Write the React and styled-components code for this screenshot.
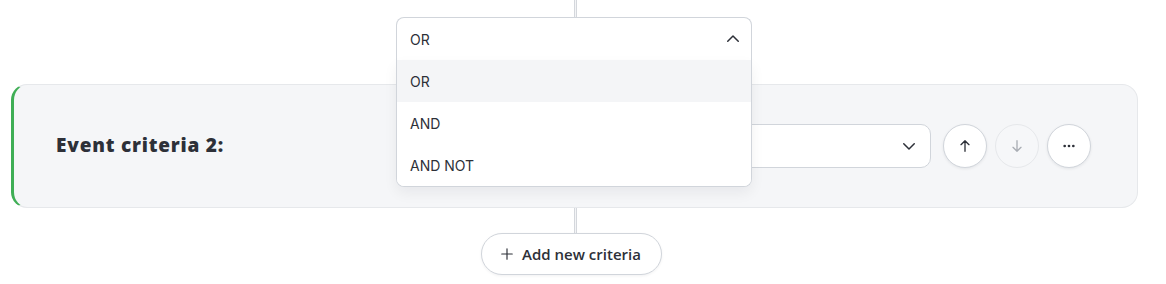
import React, { useState } from "react";
import styled, { createGlobalStyle } from "styled-components";

const GlobalStyle = createGlobalStyle`
  body {
    margin: 0;
    background: #ffffff;
    font-family: Inter, "Noto Sans", sans-serif;
    color: #2d3038;
  }
`;

const Page = styled.div`
  width: 1166px;
  height: 284px;
  display: flex;
  flex-direction: column;
  align-items: stretch;
  padding: 0 28px 0 11px;
  box-sizing: border-box;
`;

const Connector = styled.div`
  display: flex;
  flex-direction: column;
  align-items: center;
  padding-left: 2px;
`;

const Line = styled.div`
  width: 3px;
  height: ${(p) => p.h}px;
  box-sizing: border-box;
  border-left: 1px solid #d4d7dc;
  border-right: 1px solid #d4d7dc;
  background: #f3f4f6;
`;

const OperatorSelect = styled.div`
  position: relative;
  width: 356px;
  flex-shrink: 0;
  box-sizing: border-box;
  z-index: 2;
  margin-left: -3px;
`;

const Trigger = styled.div`
  height: 43px;
  box-sizing: border-box;
  display: flex;
  align-items: center;
  justify-content: space-between;
  padding: 0 9px 0 13px;
  font-size: 14px;
  color: #2d3038;
  background: #fff;
  border: 1px solid #d1d5db;
  border-bottom: none;
  border-radius: 8px 8px 0 0;
`;

const Menu = styled.div`
  position: absolute;
  left: 0;
  right: 0;
  top: 43px;
  background: #fff;
  border: 1px solid #d1d5db;
  border-top: none;
  border-radius: 0 0 8px 8px;
  box-shadow: 0 6px 14px rgba(17, 24, 39, 0.06);
  overflow: hidden;
`;

const Option = styled.div`
  height: 42px;
  display: flex;
  align-items: center;
  padding: 0 13px;
  font-size: 14px;
  color: #2d3038;
  background: ${(p) => (p.active ? "#f4f5f7" : "#fff")};
`;

const Card = styled.div`
  height: 124px;
  box-sizing: border-box;
  display: flex;
  align-items: center;
  padding: 0 46px 0 42px;
  background: #f5f6f8;
  border: 1px solid #e6e8eb;
  border-left: 3px solid #3fae55;
  border-radius: 16px;
`;

const Label = styled.div`
  font-family: "Open Sans", Inter, sans-serif;
  font-size: 19px;
  font-weight: 800;
  letter-spacing: 0.8px;
  color: #2d3038;
  flex: 1;
  padding-bottom: 2px;
`;

const FieldSelect = styled.div`
  width: 380px;
  height: 44px;
  box-sizing: border-box;
  display: flex;
  align-items: center;
  justify-content: flex-end;
  padding-right: 12px;
  background: #fff;
  border: 1px solid #d1d5db;
  border-radius: 10px;
  margin-right: 12px;
`;

const Actions = styled.div`
  display: flex;
  gap: 8px;
`;

const Circle = styled.button`
  width: 44px;
  height: 44px;
  border-radius: 50%;
  padding: 0;
  display: flex;
  align-items: center;
  justify-content: center;
  background: ${(p) => (p.disabled ? "#f6f7f9" : "#fff")};
  border: 1px solid ${(p) => (p.disabled ? "#e6e8eb" : "#d1d5db")};
  box-shadow: ${(p) => (p.disabled ? "none" : "0 1px 3px rgba(17,24,39,0.08)")};
  color: ${(p) => (p.disabled ? "#a9adb4" : "#2d3038")};
  cursor: pointer;
`;

const Footer = styled.div`
  display: flex;
  flex-direction: column;
  align-items: center;
  padding-left: 2px;
`;

const AddButton = styled.button`
  height: 42px;
  box-sizing: border-box;
  display: flex;
  align-items: center;
  gap: 8px;
  padding: 0 20px 0 18px;
  margin-left: -8px;
  border-radius: 21px;
  border: 1px solid #d1d5db;
  background: #fff;
  box-shadow: 0 1px 3px rgba(17, 24, 39, 0.06);
  font-family: "Open Sans", Inter, sans-serif;
  font-size: 15px;
  font-weight: 600;
  color: #2d3038;
  cursor: pointer;
`;

const Chevron = ({ up }) => (
  <svg width="18" height="18" viewBox="0 0 24 24" fill="none" stroke="#2d3038" strokeWidth="2" strokeLinecap="round" strokeLinejoin="round">
    <path d={up ? "M5 15l7-7 7 7" : "M5 9l7 7 7-7"} />
  </svg>
);

const Arrow = ({ down }) => (
  <svg width="16" height="16" viewBox="0 0 24 24" fill="none" stroke="currentColor" strokeWidth="2" strokeLinecap="round" strokeLinejoin="round">
    {down ? <path d="M12 4v16M6 14l6 6 6-6" /> : <path d="M12 20V4M6 10l6-6 6 6" />}
  </svg>
);

const Dots = () => (
  <svg width="16" height="16" viewBox="0 0 24 24" fill="#2d3038">
    <circle cx="5.5" cy="12" r="2" />
    <circle cx="12" cy="12" r="2" />
    <circle cx="18.5" cy="12" r="2" />
  </svg>
);

const Plus = () => (
  <svg width="14" height="14" viewBox="0 0 24 24" fill="none" stroke="#2d3038" strokeWidth="2" strokeLinecap="round">
    <path d="M12 3v18M3 12h18" />
  </svg>
);

const operators = ["OR", "AND", "AND NOT"];

export default function App() {
  const [value] = useState("OR");

  return (
    <>
      <GlobalStyle />
      <Page>
        <Connector>
          <Line h={17} />
          <OperatorSelect>
            <Trigger>
              <span>{value}</span>
              <Chevron up />
            </Trigger>
            <Menu>
              {operators.map((op) => (
                <Option key={op} active={op === value}>
                  {op}
                </Option>
              ))}
            </Menu>
          </OperatorSelect>
          <Line h={24} />
        </Connector>

        <Card>
          <Label>Event criteria 2:</Label>
          <FieldSelect>
            <Chevron />
          </FieldSelect>
          <Actions>
            <Circle>
              <Arrow />
            </Circle>
            <Circle disabled>
              <Arrow down />
            </Circle>
            <Circle>
              <Dots />
            </Circle>
          </Actions>
        </Card>

        <Footer>
          <Line h={25} />
          <AddButton>
            <Plus />
            Add new criteria
          </AddButton>
        </Footer>
      </Page>
    </>
  );
}
